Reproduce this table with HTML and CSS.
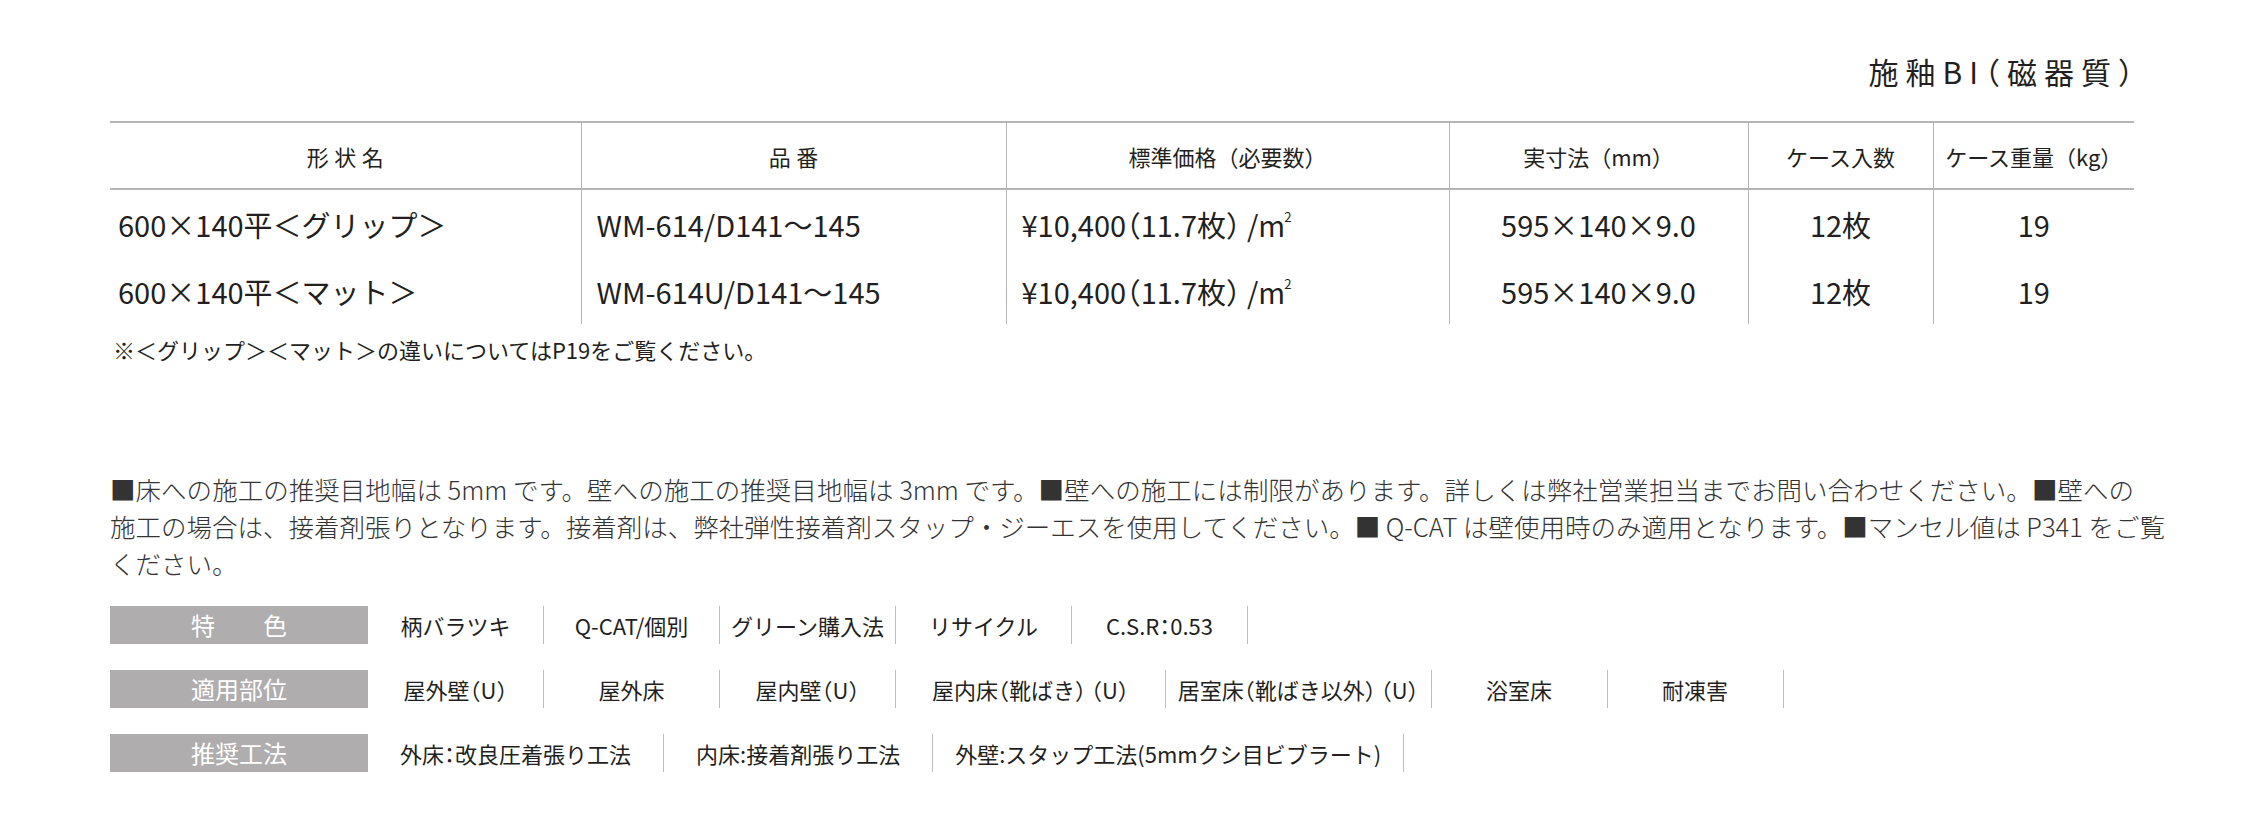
FILE: index.html
```html
<!DOCTYPE html>
<html lang="ja">
<head>
<meta charset="utf-8">
<title>施釉BI（磁器質）</title>
<link rel="stylesheet" href="styles.css">
</head>
<body>
<div class="page">
  <h1 class="title">施釉BI（磁器質）</h1>

  <table class="spec">
    <colgroup>
      <col class="c1"><col class="c2"><col class="c3"><col class="c4"><col class="c5"><col class="c6">
    </colgroup>
    <thead>
      <tr>
        <th class="spaced">形状名</th>
        <th class="spaced">品番</th>
        <th>標準価格（必要数）</th>
        <th>実寸法（mm）</th>
        <th>ケース入数</th>
        <th>ケース重量（kg）</th>
      </tr>
    </thead>
    <tbody>
      <tr>
        <td class="left first">600<span class="fw">×</span>140平＜グリップ＞</td>
        <td class="left">WM-614/D141～145</td>
        <td class="left price">¥10,400（11.7枚） /m<sup>2</sup></td>
        <td>595<span class="fw">×</span>140<span class="fw">×</span>9.0</td>
        <td>12枚</td>
        <td>19</td>
      </tr>
      <tr>
        <td class="left first">600<span class="fw">×</span>140平＜マット＞</td>
        <td class="left">WM-614U/D141～145</td>
        <td class="left price">¥10,400（11.7枚） /m<sup>2</sup></td>
        <td>595<span class="fw">×</span>140<span class="fw">×</span>9.0</td>
        <td>12枚</td>
        <td>19</td>
      </tr>
    </tbody>
  </table>

  <p class="note">※＜グリップ＞＜マット＞の違いについてはP19をご覧ください。</p>

  <p class="desc">
    <span class="line">■床への施工の推奨目地幅は 5mm です。壁への施工の推奨目地幅は 3mm です。■壁への施工には制限があります。詳しくは弊社営業担当までお問い合わせください。■壁への</span>
    <span class="line">施工の場合は、接着剤張りとなります。接着剤は、弊社弾性接着剤スタップ・ジーエスを使用してください。■ Q-CAT は壁使用時のみ適用となります。■マンセル値は P341 をご覧</span>
    <span class="line last">ください。</span>
  </p>

  <div class="attrs">
    <div class="attr-row">
      <div class="attr-label">特　　色</div>
      <ul class="attr-items">
        <li>柄バラツキ</li>
        <li>Q-CAT/個別</li>
        <li>グリーン購入法</li>
        <li>リサイクル</li>
        <li>C.S.R：0.53</li>
      </ul>
    </div>
    <div class="attr-row">
      <div class="attr-label">適用部位</div>
      <ul class="attr-items">
        <li>屋外壁（U）</li>
        <li>屋外床</li>
        <li>屋内壁（U）</li>
        <li class="wider">屋内床（靴ばき） （U）</li>
        <li class="mid">居室床（靴ばき以外） （U）</li>
        <li>浴室床</li>
        <li>耐凍害</li>
      </ul>
    </div>
    <div class="attr-row">
      <div class="attr-label">推奨工法</div>
      <ul class="attr-items">
        <li class="wide">外床：改良圧着張り工法</li>
        <li class="wide">内床:接着剤張り工法</li>
        <li class="roomy">外壁:スタップ工法(5mmクシ目ビブラート)</li>
      </ul>
    </div>
  </div>
</div>
</body>
</html>
```

FILE: styles.css
```css
html, body {
  margin: 0;
  padding: 0;
  background: #ffffff;
}

body {
  font-family: "Noto Sans CJK JP", "Noto Sans", sans-serif;
  color: #231f20;
}

.page {
  width: 2024px;
  padding: 56px 0 0 110px;
}

.title {
  margin: 0 -6px 0 0;
  height: 65px;
  font-size: 30px;
  font-weight: 400;
  line-height: 30px;
  letter-spacing: 7px;
  text-align: right;
  font-feature-settings: "halt" 1;
}

.spec {
  width: 2024px;
  table-layout: fixed;
  border-collapse: collapse;
  border-top: 2px solid #b5b5b5;
}

.c1 { width: 471px; }
.c2 { width: 425px; }
.c3 { width: 443px; }
.c4 { width: 299px; }
.c5 { width: 185px; }
.c6 { width: 201px; }

.spec th {
  height: 65px;
  padding: 0;
  font-size: 22px;
  font-weight: 400;
  text-align: center;
  vertical-align: middle;
  border-bottom: 2px solid #b5b5b5;
  border-left: 1px solid #b5b5b5;
}

.spec th.spaced {
  letter-spacing: 0.25em;
  text-indent: 0.25em;
}

.spec td {
  height: 67px;
  padding: 0;
  font-size: 29px;
  font-weight: 400;
  text-align: center;
  vertical-align: middle;
  border-left: 1px solid #b5b5b5;
  white-space: nowrap;
}

.spec th:first-child,
.spec td:first-child {
  border-left: none;
}

.spec td.left {
  text-align: left;
  padding-left: 15px;
}

.spec td.first {
  padding-left: 8px;
}

.spec td.price {
  font-feature-settings: "halt" 1;
}

.fw {
  font-variant-east-asian: full-width;
}

.spec sup {
  font-size: 0.45em;
  vertical-align: 1.1em;
  line-height: 0;
  margin-left: -1px;
}

.note {
  margin: 11px 0 0 3px;
  font-size: 22px;
  line-height: 28px;
}

.desc {
  margin: 107px 0 0 0;
  font-size: 25.5px;
  line-height: 37px;
  font-weight: 300;
  color: #333333;
}

.desc .line {
  display: block;
  text-align: justify;
  text-align-last: justify;
  white-space: nowrap;
}

.desc .line.last {
  text-align-last: left;
}

.attrs {
  margin-top: 25px;
  display: flex;
  flex-direction: column;
  gap: 26px;
}

.attr-row {
  display: flex;
  align-items: stretch;
  height: 38px;
}

.attr-label {
  width: 258px;
  flex: none;
  background: #afadae;
  color: #ffffff;
  font-size: 24px;
  line-height: 38px;
  text-align: center;
}

.attr-items {
  display: flex;
  margin: 0;
  padding: 0;
  list-style: none;
}

.attr-items li {
  min-width: 176px;
  box-sizing: border-box;
  padding: 0 10px;
  border-right: 1px solid #bdbdbd;
  font-size: 22px;
  line-height: 38px;
  text-align: center;
  white-space: nowrap;
  font-feature-settings: "halt" 1;
}

.attr-items li.wide {
  padding: 0 32px;
}

.attr-items li.wider {
  padding: 0 36px;
}

.attr-items li.mid {
  padding: 0 12px;
}

.attr-items li.roomy {
  padding: 0 22px;
}
```
